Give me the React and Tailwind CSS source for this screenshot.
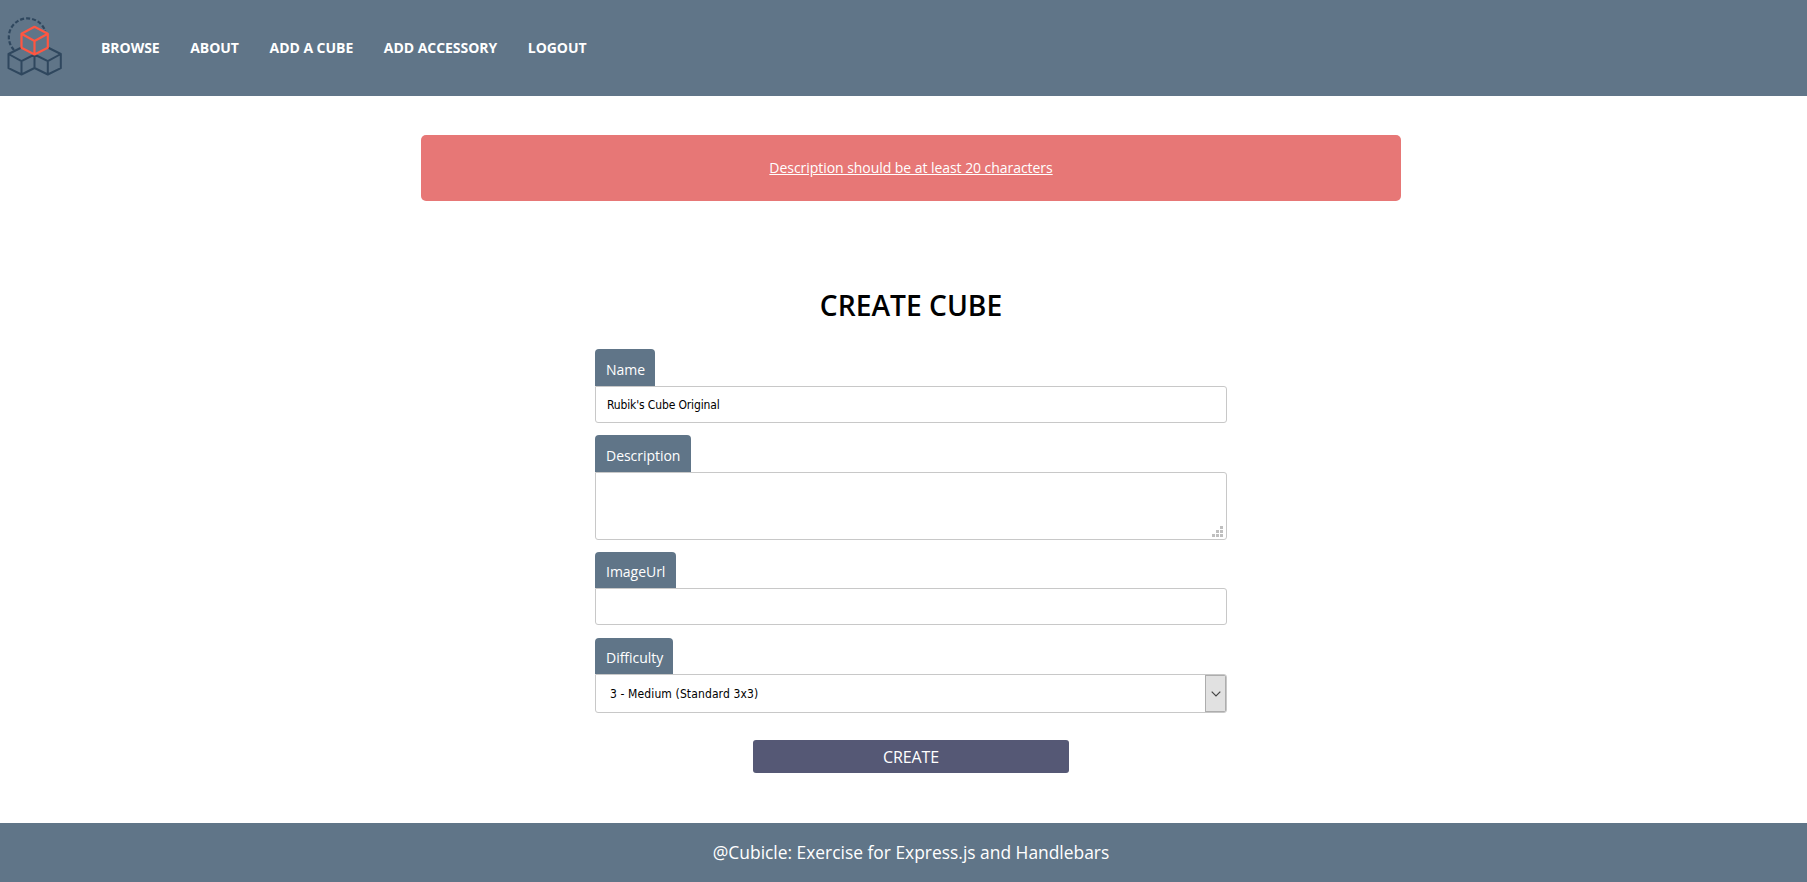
const navItems = ["Browse", "About", "Add a cube", "Add accessory", "Logout"];

function Logo() {
  return (
    <svg className="h-24 w-[70px] shrink-0" viewBox="0 0 70 96" fill="none" strokeWidth="2" strokeLinejoin="round">
      <path d="M14 50A18.7 18.7 0 1 1 45.2 31" stroke="#2f475e" strokeWidth="2.2" strokeDasharray="4 2" />
      <path
        d="M21.5 47.5L8.5 54V68.2L21.5 74.5L34.5 68L47.8 74.5L60.8 68.2V54L47.8 47.5M8.5 54L21.5 61.2L34.5 54.5L47.8 61.2L60.8 54M21.5 61.2V74.5M34.5 54.5V68M47.8 61.2V74.5"
        stroke="#2f475e"
      />
      <path
        d="M34.5 26.8L21.5 33.8V47.8L34.5 54.5L47.8 47.8V33.8ZM21.5 33.8L34.5 41L47.8 33.8M34.5 41V54.5"
        stroke="#ff5641"
        strokeWidth="2.2"
      />
    </svg>
  );
}

function Label({ children, className }) {
  return (
    <label className={`flex w-fit items-center rounded-t bg-[#607588] pr-[10.3px] pl-[11px] pt-1 text-[14px] leading-5 tracking-[-0.03px] text-white ${className}`}>
      {children}
    </label>
  );
}

const control =
  "block w-full rounded-b-[3px] rounded-tr-[3px] border border-[#c8c8c8] bg-white font-['DejaVu_Sans_Condensed','DejaVu_Sans',sans-serif] text-[12px] text-black outline-none";

export default function App() {
  return (
    <div className="flex h-[882px] flex-col bg-white font-['Open_Sans',sans-serif] text-black">
      <header className="flex h-24 shrink-0 items-center bg-[#607588]">
        <Logo />
        <nav className="flex gap-[30.6px] pl-[31px]">
          {navItems.map((item) => (
            <a key={item} href="#" className="text-[14px] leading-5 font-bold tracking-[-0.04px] whitespace-nowrap text-white uppercase">
              {item}
            </a>
          ))}
        </nav>
      </header>

      <main className="flex flex-1 flex-col pl-[15px]">
        <div className="mx-auto mt-[39px] flex h-[66px] w-[980px] items-center justify-center rounded-[5px] bg-[#e77776]">
          <p className="text-[14px] leading-5 tracking-[-0.05px] text-white underline">Description should be at least 20 characters</p>
        </div>

        <form className="mx-auto mt-[84px] flex w-[632px] flex-col">
          <h1 className="text-center text-[28.2px] leading-10 font-semibold uppercase">Create Cube</h1>

          <Label className="mt-6 h-[37px]">Name</Label>
          <input className={`${control} h-[37px] px-[11px] tracking-[-0.14px]`} defaultValue="Rubik's Cube Original" />

          <Label className="mt-3 h-[37px]">Description</Label>
          <div className="relative h-[68px]">
            <textarea className={`${control} h-[68px] resize-none px-[11px] py-2`} />
            <svg className="absolute right-1 bottom-[3px] h-[11px] w-[11px]" viewBox="0 0 11 11" fill="#bfbfbf">
              <path d="M8 0h3v3H8zM4 4h3v3H4zM8 4h3v3H8zM0 8h3v3H0zM4 8h3v3H4zM8 8h3v3H8z" />
            </svg>
          </div>

          <Label className="mt-3 h-9">ImageUrl</Label>
          <input className={`${control} h-[37px] px-[11px]`} />

          <Label className="mt-[13px] h-9">Difficulty</Label>
          <div className={`${control} flex! h-[39px] items-center overflow-hidden pl-[14px] tracking-[0.12px]`}>
            <span className="flex-1">3 - Medium (Standard 3x3)</span>
            <span className="flex h-full w-[21px] items-center justify-center border border-[#adadad] bg-[#e1e1e1]">
              <svg className="h-[6px] w-[10px]" viewBox="0 0 10 6" fill="none" stroke="#444444" strokeWidth="1.2">
                <path d="M.7.7L5 5L9.3.7" />
              </svg>
            </span>
          </div>

          <button type="button" className="mx-auto mt-[27px] h-[33px] w-[316px] rounded-[3px] bg-[#555875] text-[16px] leading-6 tracking-[-0.1px] text-white uppercase">
            Create
          </button>
        </form>
      </main>

      <footer className="flex h-[59px] shrink-0 items-center justify-center bg-[#607588] pb-px pl-[15px]">
        <p className="text-[17.4px] leading-6 text-white">@Cubicle: Exercise for Express.js and Handlebars</p>
      </footer>
    </div>
  );
}
